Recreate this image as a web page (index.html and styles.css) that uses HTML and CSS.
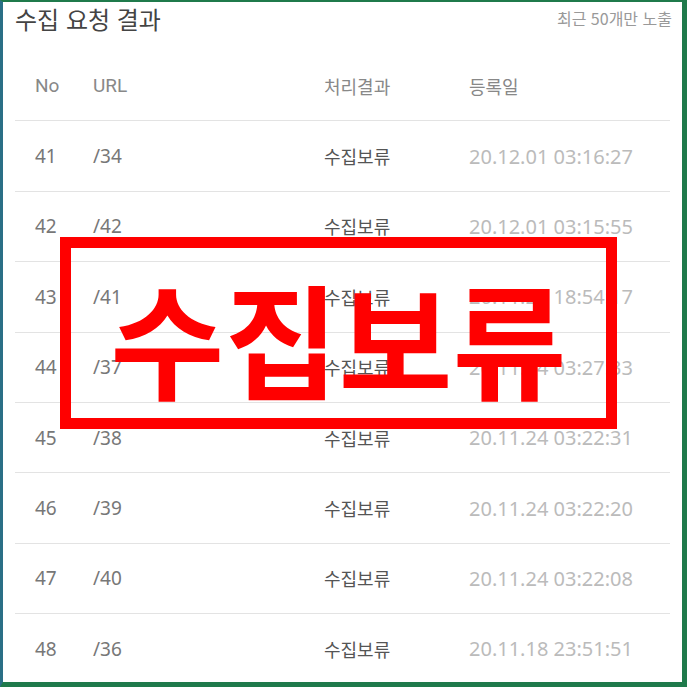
FILE: index.html
```html
<!DOCTYPE html>
<html lang="ko">
  <head>
    <meta charset="UTF-8" />
    <meta name="viewport" content="width=device-width, initial-scale=1.0" />
    <title>수집 요청 결과</title>
    <link rel="stylesheet" href="styles.css">
  </head>
  <body>
    <div class="frame">
      <!-- Title bar -->
      <div class="title-bar">
        <h2 class="title">수집 요청 결과</h2>
        <span class="note">최근 50개만 노출</span>
      </div>

      <!-- Result table -->
      <div class="result-table">
        <div class="row head">
          <span>No</span>
          <span>URL</span>
          <span>처리결과</span>
          <span>등록일</span>
        </div>
        <div class="row">
          <span class="num">41</span>
          <span class="url">/34</span>
          <span class="status">수집보류</span>
          <span class="date">20.12.01 03:16:27</span>
        </div>
        <div class="row">
          <span class="num">42</span>
          <span class="url">/42</span>
          <span class="status">수집보류</span>
          <span class="date">20.12.01 03:15:55</span>
        </div>
        <div class="row">
          <span class="num">43</span>
          <span class="url">/41</span>
          <span class="status">수집보류</span>
          <span class="date">20.11.24 18:54:17</span>
        </div>
        <div class="row">
          <span class="num">44</span>
          <span class="url">/37</span>
          <span class="status">수집보류</span>
          <span class="date">20.11.24 03:27:33</span>
        </div>
        <div class="row">
          <span class="num">45</span>
          <span class="url">/38</span>
          <span class="status">수집보류</span>
          <span class="date">20.11.24 03:22:31</span>
        </div>
        <div class="row">
          <span class="num">46</span>
          <span class="url">/39</span>
          <span class="status">수집보류</span>
          <span class="date">20.11.24 03:22:20</span>
        </div>
        <div class="row">
          <span class="num">47</span>
          <span class="url">/40</span>
          <span class="status">수집보류</span>
          <span class="date">20.11.24 03:22:08</span>
        </div>
        <div class="row">
          <span class="num">48</span>
          <span class="url">/36</span>
          <span class="status">수집보류</span>
          <span class="date">20.11.18 23:51:51</span>
        </div>
      </div>

      <!-- Red stamp over the table -->
      <div class="stamp">수집보류</div>
    </div>
  </body>
</html>
```

FILE: styles.css
```css
html,
body {
  margin: 0;
  padding: 0;
  background-color: #fff;
}
body {
  font-family: "Noto Sans", "Noto Sans CJK KR", sans-serif;
}
.frame {
  position: relative;
  width: 687px;
  height: 687px;
  box-sizing: border-box;
  border-style: solid;
  border-width: 2px 5px 5px 3px;
  border-color: #1f7a4b #1f7a4b #1f7a4b #2a6f86;
  overflow: hidden;
  background-color: #fff;
}
.title-bar {
  display: flex;
  justify-content: space-between;
  align-items: flex-start;
  height: 49px;
  padding: 0 10px 0 12px;
}
.title {
  margin: 0;
  font-family: "Noto Sans CJK KR", sans-serif;
  font-size: 24px;
  font-weight: 400;
  line-height: 34px;
  color: #444;
}
.note {
  font-family: "Noto Sans CJK KR", sans-serif;
  font-size: 16px;
  line-height: 32px;
  color: #999;
}
.result-table {
  margin: 0 12px;
}
.row {
  display: grid;
  grid-template-columns: 58px 231px 145px 1fr;
  align-items: center;
  height: 70.4px;
  box-sizing: border-box;
  padding-left: 20px;
  border-bottom: 1px solid #e3e3e3;
  font-size: 19px;
  color: #777;
}
.row.head {
  font-family: "Roboto", "Noto Sans CJK KR", sans-serif;
  color: #888;
}
.row.head span:nth-child(n + 3) {
  font-family: "Noto Sans CJK KR", sans-serif;
  font-size: 18px;
}
.status {
  font-family: "Noto Sans CJK KR", sans-serif;
  font-size: 18px;
  color: #555;
}
.date {
  font-size: 20px;
  color: #bbb;
}
.stamp {
  position: absolute;
  left: 57px;
  top: 235px;
  width: 557px;
  height: 192px;
  box-sizing: border-box;
  border: 11px solid #ff0000;
  display: flex;
  justify-content: center;
  align-items: center;
  padding-top: 6px;
  font-family: "Noto Sans CJK KR", sans-serif;
  font-size: 124px;
  font-weight: 700;
  color: #ff0000;
  line-height: 1;
}
```
